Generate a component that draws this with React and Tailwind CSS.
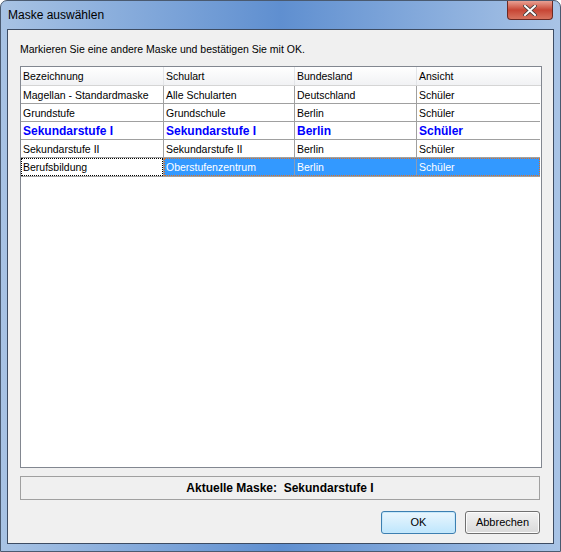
import React from "react";

const cols = [
  { key: "bez", label: "Bezeichnung", w: "w-[143px]" },
  { key: "art", label: "Schulart", w: "w-[131px]" },
  { key: "land", label: "Bundesland", w: "w-[122px]" },
  { key: "ans", label: "Ansicht", w: "w-[124px]" },
];

const rows = [
  { bez: "Magellan - Standardmaske", art: "Alle Schularten", land: "Deutschland", ans: "Schüler" },
  { bez: "Grundstufe", art: "Grundschule", land: "Berlin", ans: "Schüler" },
  { bez: "Sekundarstufe I", art: "Sekundarstufe I", land: "Berlin", ans: "Schüler", current: true },
  { bez: "Sekundarstufe II", art: "Sekundarstufe II", land: "Berlin", ans: "Schüler" },
  { bez: "Berufsbildung", art: "Oberstufenzentrum", land: "Berlin", ans: "Schüler", selected: true },
];

function Row({ row }) {
  if (row.selected) {
    return (
      <div className="flex h-[19px] border-b border-[#a0a0a0]">
        <div className="w-[143px] shrink-0 border-r border-[#a0a0a0] bg-white">
          <div className="h-full px-[1px] border border-dotted border-black leading-[16px]">{row.bez}</div>
        </div>
        <div className="flex flex-1 bg-[#3399ff] text-white border border-dotted border-[#e07020]">
          <div className="w-[130px] shrink-0 border-r border-[#8a9cb8] px-[1px] leading-[16px]">{row.art}</div>
          <div className="w-[122px] shrink-0 border-r border-[#8a9cb8] px-[2px] leading-[16px]">{row.land}</div>
          <div className="flex-1 px-[2px] leading-[16px]">{row.ans}</div>
        </div>
      </div>
    );
  }
  return (
    <div
      className={`flex h-[18px] border-b border-[#a0a0a0] bg-white ${
        row.current ? "font-bold text-[12px] text-[#0000ff]" : "text-black"
      }`}
    >
      {cols.map((c, i) => (
        <div
          key={c.key}
          className={`${i === 3 ? "flex-1" : c.w + " shrink-0 border-r border-[#a0a0a0]"} px-[2px] leading-[18px] whitespace-nowrap overflow-hidden`}
        >
          {row[c.key]}
        </div>
      ))}
    </div>
  );
}

export default function App() {
  return (
    <div
      className="w-[561px] h-[552px] flex flex-col rounded-t-[7px] border border-[#4a5a70] bg-gradient-to-r from-[#a8c3e4] via-[#5f8fd0] to-[#a9c4e6] px-[6px] pb-[7px] relative"
      style={{ fontFamily: '"Liberation Sans", Arial, sans-serif' }}
    >
      {/* title bar */}
      <div className="h-[28px] flex items-center pl-[1px] text-[12px] text-black shrink-0">
        Maske auswählen
      </div>
      <div className="absolute top-0 right-[7px] w-[46px] h-[19px] rounded-b-[4px] border border-t-0 border-[#6b2a24] bg-gradient-to-b from-[#e8a093] via-[#c74534] to-[#d7735f] flex items-center justify-center">
        <svg width="14" height="11" viewBox="0 0 14 11">
          <path d="M2 1 L12 10 M12 1 L2 10" stroke="#3a3a3a" strokeWidth="3.6" strokeLinecap="square" />
          <path d="M2 1 L12 10 M12 1 L2 10" stroke="#ffffff" strokeWidth="2" strokeLinecap="square" />
        </svg>
      </div>

      {/* client area */}
      <div className="flex-1 flex flex-col border border-[#3d4c63] bg-[#f0f0f0] text-[10.5px] text-black">
        <div className="h-[36px] flex items-center pl-[12px] pt-[3px] shrink-0">
          Markieren Sie eine andere Maske und bestätigen Sie mit OK.
        </div>

        {/* table */}
        <div className="ml-[12px] mr-[11px] h-[402px] border border-[#828790] bg-white flex flex-col shrink-0">
          <div className="flex h-[19px] border-b border-[#d5d5d5] bg-gradient-to-b from-white to-[#f1f2f4]">
            {cols.map((c, i) => (
              <div
                key={c.key}
                className={`${i === 3 ? "flex-1" : c.w + " shrink-0 border-r border-[#e3e5e8]"} px-[2px] leading-[19px]`}
              >
                {c.label}
              </div>
            ))}
          </div>
          <div className="mr-[1px]">
            {rows.map((r) => (
              <Row key={r.bez} row={r} />
            ))}
          </div>
        </div>

        {/* status */}
        <div className="ml-[12px] mr-[13px] mt-[8px] h-[24px] border border-[#a0a0a0] flex items-center justify-center font-bold text-[12px] shrink-0">
          Aktuelle Maske:&nbsp;&nbsp;Sekundarstufe I
        </div>

        {/* buttons */}
        <div className="flex justify-end gap-[9px] mr-[13px] mt-[11px]">
          <button className="w-[75px] h-[23px] rounded-[3px] border border-[#3c7fb1] bg-gradient-to-b from-[#eaf6fd] to-[#bee6fd] shadow-[inset_0_0_0_1px_#c6e8fb] text-[11px]">
            OK
          </button>
          <button className="w-[75px] h-[23px] rounded-[3px] border border-[#707070] bg-gradient-to-b from-[#f2f2f2] to-[#d9d9d9] shadow-[inset_0_0_0_1px_#fcfcfc] text-[11px]">
            Abbrechen
          </button>
        </div>
      </div>
    </div>
  );
}
